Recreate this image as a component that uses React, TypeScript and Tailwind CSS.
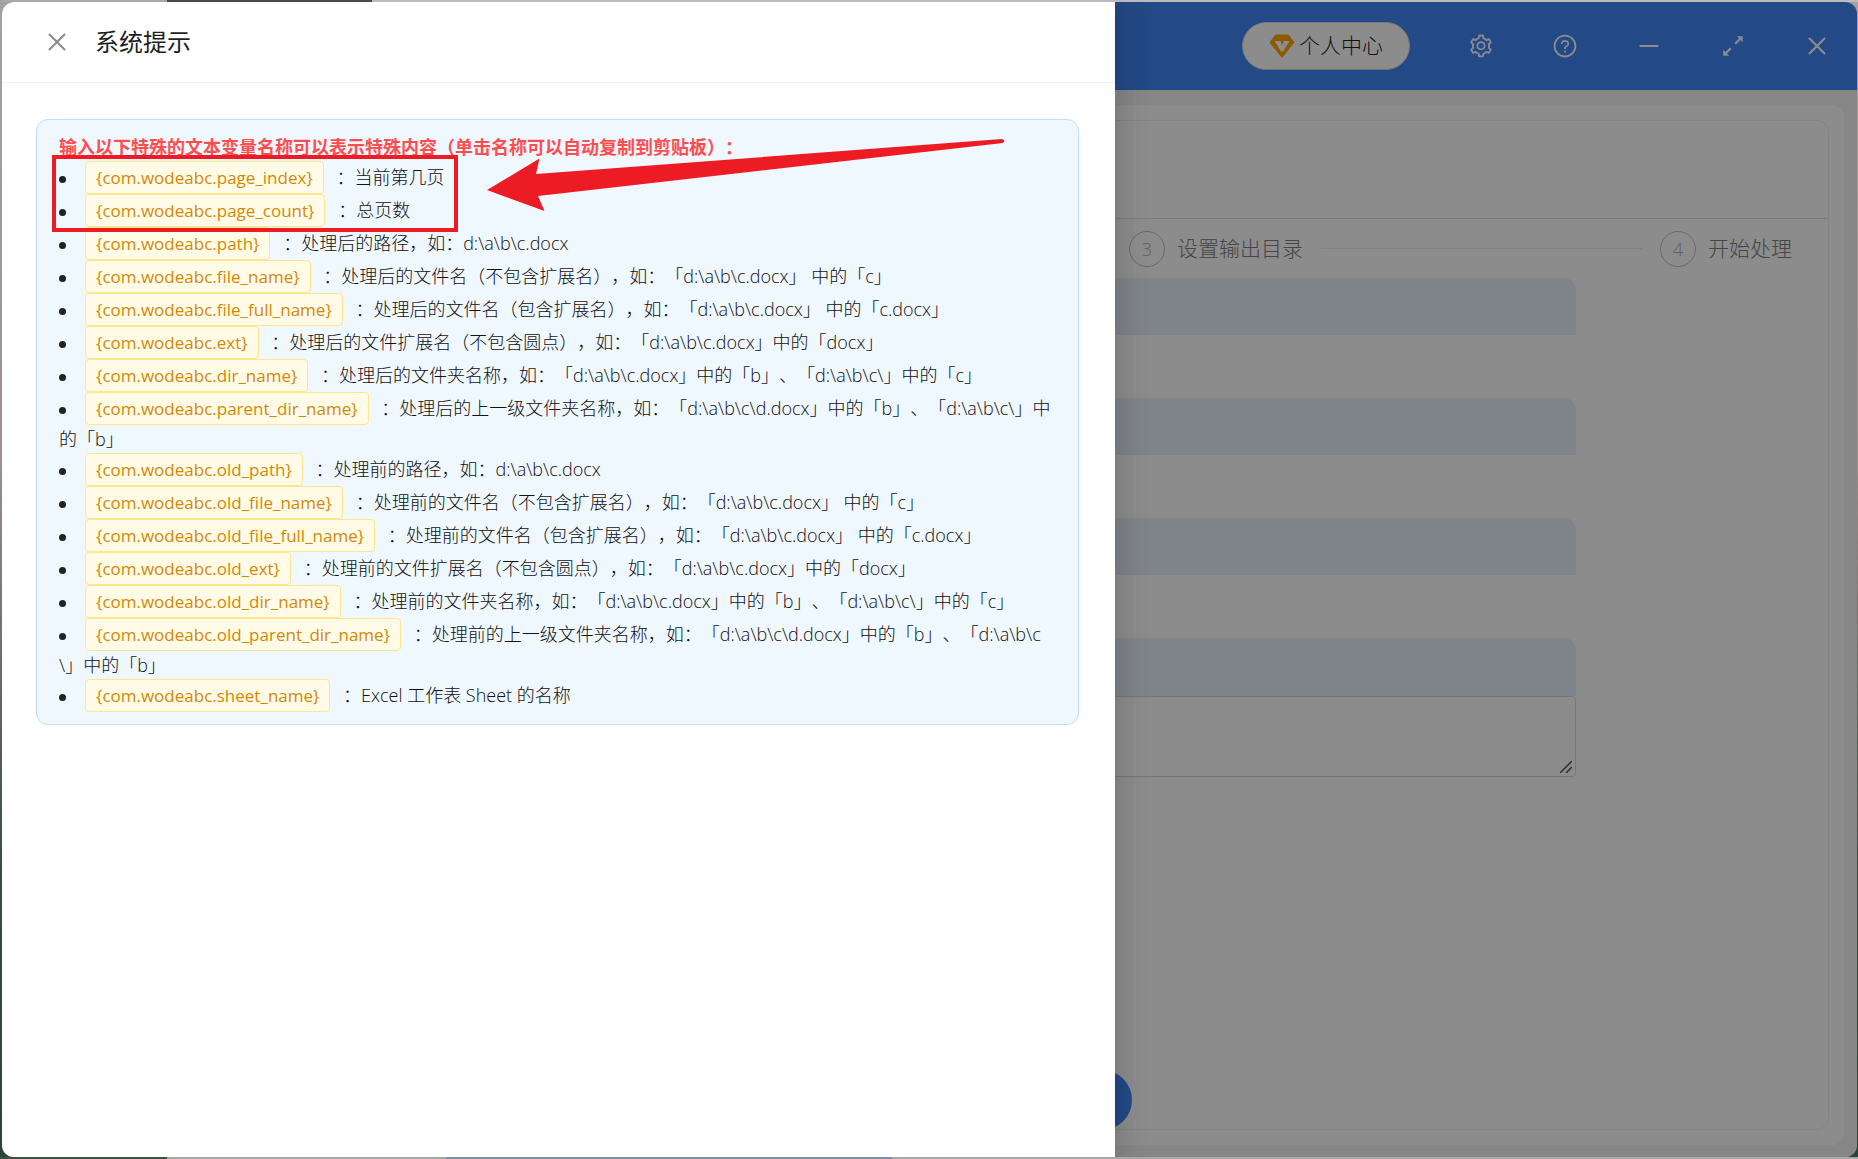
import { AiOutlineClose, AiOutlineMinus, AiOutlineQuestionCircle, AiOutlineSetting } from 'react-icons/ai';

const variables = [
  { name: 'page_index', desc: '当前第几页' },
  { name: 'page_count', desc: '总页数' },
  { name: 'path', desc: '处理后的路径，如：d:\\a\\b\\c.docx' },
  { name: 'file_name', desc: '处理后的文件名（不包含扩展名），如：「d:\\a\\b\\c.docx」 中的「c」' },
  { name: 'file_full_name', desc: '处理后的文件名（包含扩展名），如：「d:\\a\\b\\c.docx」 中的「c.docx」' },
  { name: 'ext', desc: '处理后的文件扩展名（不包含圆点），如：「d:\\a\\b\\c.docx」中的「docx」' },
  { name: 'dir_name', desc: '处理后的文件夹名称，如：「d:\\a\\b\\c.docx」中的「b」、「d:\\a\\b\\c\\」中的「c」' },
  { name: 'parent_dir_name', desc: '处理后的上一级文件夹名称，如：「d:\\a\\b\\c\\d.docx」中的「b」、「d:\\a\\b\\c\\」中的「b」' },
  { name: 'old_path', desc: '处理前的路径，如：d:\\a\\b\\c.docx' },
  { name: 'old_file_name', desc: '处理前的文件名（不包含扩展名），如：「d:\\a\\b\\c.docx」 中的「c」' },
  { name: 'old_file_full_name', desc: '处理前的文件名（包含扩展名），如：「d:\\a\\b\\c.docx」 中的「c.docx」' },
  { name: 'old_ext', desc: '处理前的文件扩展名（不包含圆点），如：「d:\\a\\b\\c.docx」中的「docx」' },
  { name: 'old_dir_name', desc: '处理前的文件夹名称，如：「d:\\a\\b\\c.docx」中的「b」、「d:\\a\\b\\c\\」中的「c」' },
  { name: 'old_parent_dir_name', desc: '处理前的上一级文件夹名称，如：「d:\\a\\b\\c\\d.docx」中的「b」、「d:\\a\\b\\c\\」中的「b」' },
  { name: 'sheet_name', desc: 'Excel 工作表 Sheet 的名称' },
];

const VipIcon = () => (
  <svg viewBox="0 0 26 24" className="w-[26px] h-6">
    <path d="M6.5 1h13L25 8.500 13 23.500 1 8.500z" fill="#ffa50a" stroke="#ffa50a" strokeLinejoin="round" />
    <path d="M5.500 7h6l1.500 4.500L15 7h5.500L14 17.500h-2z" fill="#fff" />
  </svg>
);

const ExpandIcon = () => (
  <svg viewBox="0 0 24 24" className="w-[26px] h-[26px]" fill="currentColor" stroke="currentColor">
    <path d="M14 10l5-5M10 14l-5 5" strokeWidth="2" />
    <path d="M15.500 3H21v5.500zM3 15.500V21h5.500z" stroke="none" />
  </svg>
);

const TopBar = () => (
  <header className="flex items-center justify-end gap-[58px] h-[88px] bg-[#4085f5] text-white pr-[27px]">
    <button className="flex items-center justify-center gap-1 w-[168px] h-12 rounded-3xl bg-white border border-gray-300 text-[21px] text-[#222] font-light">
      <VipIcon />
      个人中心
    </button>
    <button aria-label="设置">
      <AiOutlineSetting className="w-[26px] h-[26px]" />
    </button>
    <button aria-label="帮助">
      <AiOutlineQuestionCircle className="w-[26px] h-[26px]" />
    </button>
    <button aria-label="最小化">
      <AiOutlineMinus className="w-[26px] h-[26px]" />
    </button>
    <button aria-label="最大化">
      <ExpandIcon />
    </button>
    <button aria-label="关闭窗口">
      <AiOutlineClose className="w-[26px] h-[26px]" />
    </button>
  </header>
);

const Step = ({ index, title }: { index: number; title: string }) => (
  <div className="flex items-center gap-3 text-[21px] font-light">
    <span className="flex items-center justify-center w-9 h-9 rounded-full border border-[#bfbfbf] text-lg text-[#b0b0b0]">{index}</span>
    <span className="text-[#808080]">{title}</span>
  </div>
);

const Workspace = () => (
  <main className="flex-1 flex flex-col bg-[#f4f4f4] pt-[15px] pl-3 pr-[13px] pb-3">
    <div className="flex-1 flex flex-col bg-white rounded-xl p-[15px]">
      <div className="flex-1 flex flex-col border border-[#efefef] rounded-xl">
        <div className="h-[98px] border-b border-[#e4e4e4]" />
        <div className="flex items-center gap-[18px] w-[663px] ml-auto mr-9 h-[59px]">
          <Step index={3} title="设置输出目录" />
          <div className="flex-1 h-px bg-[#ebebeb]" />
          <Step index={4} title="开始处理" />
        </div>
        <div className="w-[72%] mx-auto">
          <div className="h-[57px] mb-[63px] bg-[#e8eefc] rounded-t-xl" />
          <div className="h-[57px] mb-[63px] bg-[#e8eefc] rounded-t-xl" />
          <div className="h-[57px] mb-[63px] bg-[#e8eefc] rounded-t-xl" />
          <div className="h-[58px] bg-[#e8eefc] rounded-t-xl" />
          <div className="relative">
            <textarea aria-label="文本" className="block w-full h-[81px] border border-[#d9d9d9] rounded resize-none" />
            <svg viewBox="0 0 12 12" className="absolute right-1 bottom-1 w-3 h-3" stroke="#555" strokeWidth="1.500">
              <path d="M0 12 12 0M6 12l6-6" />
            </svg>
          </div>
        </div>
      </div>
    </div>
  </main>
);

const Arrow = () => (
  <svg viewBox="0 0 520 74" className="absolute left-[450px] top-[19px] w-[520px] h-[74px] pointer-events-none">
    <path d="M0 51 52.500 19.500 49 35 515 0Q519 1 516 4L51 57 57.500 72z" fill="#ed1c24" />
  </svg>
);

const Drawer = () => (
  <aside className="absolute inset-y-0 left-0 w-3/5 bg-white shadow-[6px_0_16px_rgba(0,0,0,0.08),9px_0_28px_8px_rgba(0,0,0,0.05)]">
    <div className="flex items-center h-[81px] px-[42px] border-b border-[#f0f0f0]">
      <button aria-label="关闭" className="mr-[25px] text-[#8c8c8c]">
        <AiOutlineClose className="w-[26px] h-[26px]" />
      </button>
      <h2 className="text-2xl text-[#1f1f1f]">系统提示</h2>
    </div>
    <div className="pl-[34px] pr-9 pt-9">
      <div className="relative px-[22px] pt-[13px] pb-3 rounded-xl border border-[#bddcff] bg-[#eff7ff] text-lg leading-7 text-[#111]">
        <p className="font-bold text-[#ff4d4f]">输入以下特殊的文本变量名称可以表示特殊内容（单击名称可以自动复制到剪贴板）：</p>
        <ul className="break-all font-light">
          {variables.map((item) => (
            <li key={item.name}>
              <span className="inline-block w-[7px] h-[7px] mr-[19px] rounded-full bg-[#222] align-middle" />
              <button className="inline-block h-[33px] px-[10px] mr-2 rounded-sm border border-[#ffe58f] bg-[#fffbe6] text-[17px] leading-[31px] text-[#d48806] font-normal">
                {`{com.wodeabc.${item.name}}`}
              </button>{' '}
              ：{item.desc}
            </li>
          ))}
        </ul>
        <div className="absolute left-[15px] top-[35px] w-[406px] h-[77px] border-4 border-[#ed1c24] pointer-events-none" />
        <Arrow />
      </div>
    </div>
  </aside>
);

const App = () => {
  return (
    <div className="flex min-h-screen pt-[2px] pb-[2px] pl-[2px] pr-px bg-[linear-gradient(90deg,#a8a8a8_9%,#4d494a_9%,#4d494a_20%,#bbb_20%),linear-gradient(90deg,#3c5044_9%,#a5a8a5_9%,#a5a8a5_24%,#828ea3_24%,#828ea3_48%,#a8a8a8_48%),linear-gradient(#a8a0a0,#9a9090_40%,#3c4a44_75%,#2c4438)] bg-[size:100%_2px,100%_2px,100%_100%] bg-[position:top,bottom,top] bg-no-repeat font-['Open_Sans','Noto_Sans_CJK_SC',sans-serif] [text-spacing-trim:space-all]">
      <div className="relative flex-1 flex flex-col rounded-xl overflow-hidden">
        <TopBar />
        <Workspace />
        <button aria-label="下一步" className="absolute left-[1070px] bottom-[27px] w-[60px] h-[60px] rounded-full bg-[#4085f5]" />
        <div className="absolute inset-0 bg-black/45" />
        <Drawer />
      </div>
    </div>
  );
};

export default App;
